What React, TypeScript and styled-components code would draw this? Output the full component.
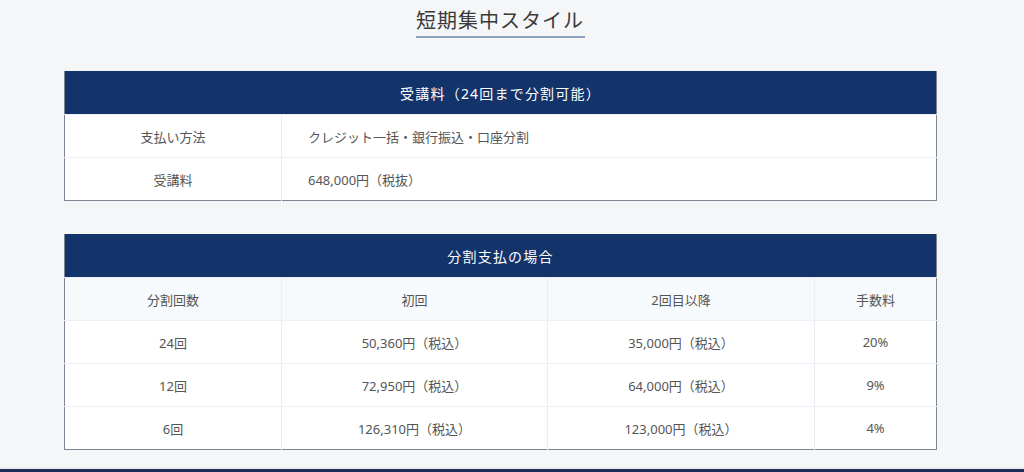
import styled, { createGlobalStyle } from 'styled-components';

const GlobalStyle = createGlobalStyle`
    html, body {
        margin: 0;
        padding: 0;
        background: #f5f6f7;
        font-family: "Noto Sans", "Noto Sans CJK JP", sans-serif;
        color: #555;
    }
`

const Page = styled.div`
    display: flex;
    flex-direction: column;
    min-height: 472px;
`

const Main = styled.main`
    width: 1001px;
    display: flex;
    flex-direction: column;
    align-items: center;
    padding-top: 5px;
`

const Title = styled.h2`
    margin: 0 0 33px;
    font-family: "Noto Sans CJK JP", sans-serif;
    font-weight: 400;
    font-size: 20px;
    line-height: 30px;
    letter-spacing: 1px;
    color: #3a3a3a;
    padding: 0 1px 1px 0;
    border-bottom: 2px solid #8ea2bf;
`

const Table = styled.table`
    width: 873px;
    border-collapse: collapse;
    table-layout: fixed;
    background: #fff;
    border: 1.5px solid #7d8794;
    border-top: none;
    margin-bottom: 33px;
    font-size: 13px;
    &:last-child {
        margin-bottom: 0;
    }
`

const Caption = styled.th`
    height: 43px;
    padding: 0;
    background: #13336b;
    color: #fff;
    font-weight: 400;
    font-size: 14px;
    letter-spacing: 1.2px;
    text-align: center;
    border: none;
`

const Cell = styled.td<{ $left?: boolean; $head?: boolean }>`
    height: 42px;
    padding: 0 0 0 ${p => (p.$left ? '26px' : '0')};
    text-align: ${p => (p.$left ? 'left' : 'center')};
    border-top: 1px solid #edf1f5;
    border-left: 1px solid #e6eef6;
    background: ${p => (p.$head ? '#f7fafd' : '#fff')};
    color: #555;
    &:first-child {
        border-left: none;
    }
`

const Footer = styled.footer`
    margin-top: 17px;
    flex: 1;
    background: #1b2d55;
    border-top: 2px solid #e9ecf2;
`

const plans = [
    ['24回', '50,360円（税込）', '35,000円（税込）', '20%'],
    ['12回', '72,950円（税込）', '64,000円（税込）', '9%'],
    ['6回', '126,310円（税込）', '123,000円（税込）', '4%'],
]

export default function App() {
    return (
        <>
        <GlobalStyle />
        <Page>
        <Main>
            <Title>短期集中スタイル</Title>
            <Table>
                <colgroup>
                    <col style={{ width: 217 }} />
                    <col />
                </colgroup>
                <thead>
                    <tr><Caption colSpan={2}>受講料（24回まで分割可能）</Caption></tr>
                </thead>
                <tbody>
                    <tr>
                        <Cell>支払い方法</Cell>
                        <Cell $left>クレジット一括・銀行振込・口座分割</Cell>
                    </tr>
                    <tr>
                        <Cell>受講料</Cell>
                        <Cell $left>648,000円（税抜）</Cell>
                    </tr>
                </tbody>
            </Table>
            <Table>
                <colgroup>
                    <col style={{ width: 217 }} />
                    <col style={{ width: 266 }} />
                    <col style={{ width: 267 }} />
                    <col />
                </colgroup>
                <thead>
                    <tr><Caption colSpan={4}>分割支払の場合</Caption></tr>
                </thead>
                <tbody>
                    <tr>
                        <Cell $head>分割回数</Cell>
                        <Cell $head>初回</Cell>
                        <Cell $head>2回目以降</Cell>
                        <Cell $head>手数料</Cell>
                    </tr>
                    {plans.map(row => (
                        <tr key={row[0]}>
                            {row.map((v, i) => <Cell key={i}>{v}</Cell>)}
                        </tr>
                    ))}
                </tbody>
            </Table>
        </Main>
        <Footer />
        </Page>
        </>
    );
}
